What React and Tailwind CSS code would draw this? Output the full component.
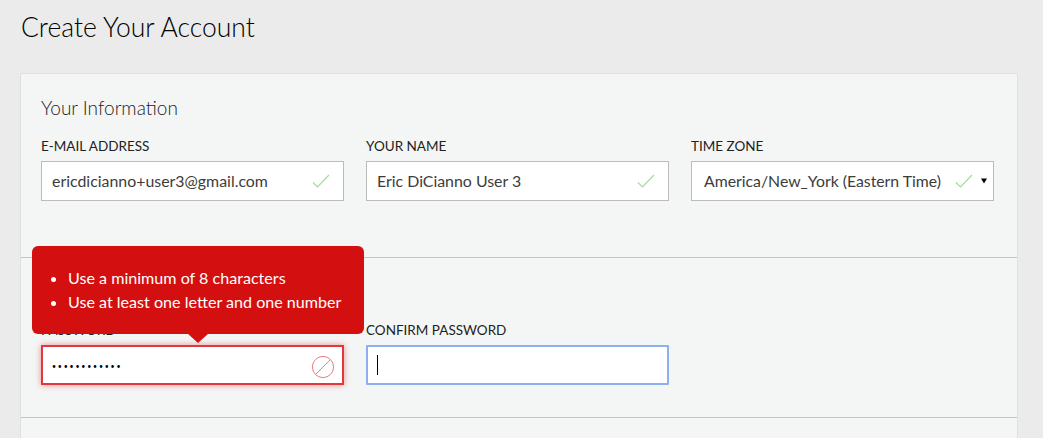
import React from 'react';

function Check() {
  return (
    <svg width="18" height="14" viewBox="0 0 18 14" fill="none" className="shrink-0">
      <path d="M1 8.5 L5.5 13 L17 1" stroke="#a5dc9c" strokeWidth="1.2" />
    </svg>
  );
}

function Field({ label, children }) {
  return (
    <div>
      <div className="text-[13.5px] leading-[16px] text-[#222] mb-[7px] uppercase">{label}</div>
      {children}
    </div>
  );
}

function ValidInput({ value }) {
  return (
    <div className="h-[40px] bg-white border border-[#bcbcbc] flex items-center pl-[10px] pr-[13px] justify-between">
      <input readOnly value={value} className="text-[15.9px] text-[#3c3c3c] outline-none bg-transparent w-full" />
      <Check />
    </div>
  );
}

export default function App() {
  return (
    <div className="h-[438px] overflow-hidden bg-[#ebebeb] pl-[20px] pr-[25px] font-['Lato',sans-serif]">
      <h1 className="text-[26.5px] leading-[30px] font-light text-black pt-[12px] pl-[1px] mb-[31px] box-content">Create Your Account</h1>

      <div className="bg-[#f4f6f5] border border-[#e0e0e0] rounded-[2px] h-[500px]">
        <section className="h-[184px] pl-[20px] pr-[23px] pt-[22px] border-b border-[#c4c6c5]">
          <h2 className="text-[19px] leading-[24px] font-light text-[#222] mb-[18px]">Your Information</h2>
          <div className="grid grid-cols-3 gap-[22px]">
            <Field label="E-mail Address"><ValidInput value="ericdicianno+user3@gmail.com" /></Field>
            <Field label="Your Name"><ValidInput value="Eric DiCianno User 3" /></Field>
            <Field label="Time Zone">
              <div className="h-[40px] bg-white border border-[#bcbcbc] flex items-center pl-[12px] pr-[6px] justify-between">
                <span className="text-[15.8px] text-[#3c3c3c] whitespace-nowrap">America/New_York (Eastern Time)</span>
                <div className="flex items-center gap-[8px]">
                  <Check />
                  <svg width="6" height="6" viewBox="0 0 6 6" className="shrink-0 mb-[1px]">
                    <path d="M0 0.5 H6 L3 5.5 Z" fill="#000" />
                  </svg>
                </div>
              </div>
            </Field>
          </div>
        </section>

        <section className="h-[160px] pl-[20px] pr-[23px] border-b border-[#c4c6c5] relative pt-[64px]">
          <div className="grid grid-cols-3 gap-[22px]">
            <Field label="Password">
              <div className="h-[40px] bg-white border-2 border-[#e0383c] shadow-[0_0_6px_rgba(224,56,60,0.55)] flex items-center pl-[9px] pr-[7px] justify-between">
                <input readOnly type="password" value="abcdefgh1234" className="text-[7px] tracking-[1.8px] text-black outline-none bg-transparent w-full mt-[2px]" />
                <svg width="24" height="24" viewBox="0 0 24 24" fill="none" className="shrink-0 mt-[3px]">
                  <circle cx="12" cy="12" r="10.6" stroke="#ec7b7e" strokeWidth="1" />
                  <path d="M4.8 19.2 L19.2 4.8" stroke="#ec7b7e" strokeWidth="1" />
                </svg>
              </div>
            </Field>
            <Field label="Confirm Password">
              <div className="h-[40px] bg-white border-2 border-[#8cb0ee] rounded-[1px] flex items-center pl-[9px]">
                <div className="w-[1px] h-[20px] bg-black" />
              </div>
            </Field>
          </div>

          {/* error tooltip over the password field */}
          <div className="absolute left-[11px] top-[-12px] w-[332px] h-[88px] bg-[#d40f0f] rounded-[6px] text-white text-[16.1px] leading-[24px] pt-[20px] pl-[36px]">
            <ul className="list-disc">
              <li>Use a minimum of 8 characters</li>
              <li>Use at least one letter and one number</li>
            </ul>
            <div className="absolute left-[155px] bottom-[-9px] w-0 h-0 border-l-[11px] border-r-[11px] border-t-[10px] border-l-transparent border-r-transparent border-t-[#d40f0f]" />
          </div>
        </section>
      </div>
    </div>
  );
}
